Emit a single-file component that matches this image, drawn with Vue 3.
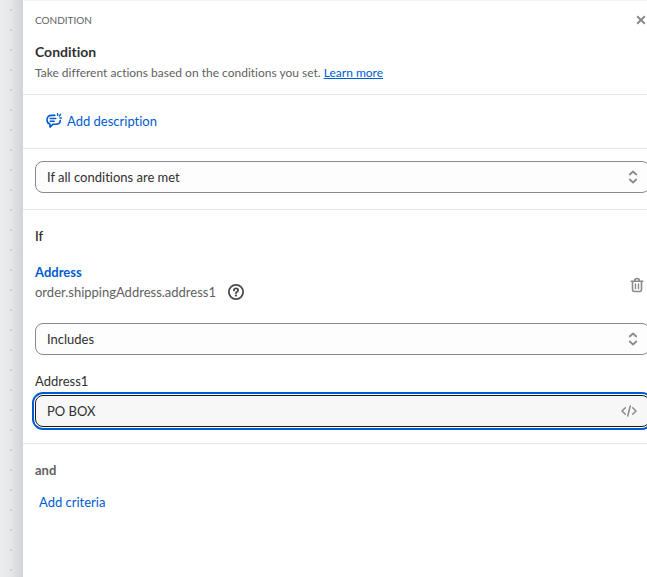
<script setup>
import { ref } from 'vue'

const match = ref('If all conditions are met')
const operator = ref('Includes')
const value = ref('PO BOX')
</script>

<template>
  <div class="workspace">
    <div class="canvas"></div>
    <main class="panel">
      <header class="section intro">
        <div class="topbar">
          <span class="eyebrow">CONDITION</span>
          <button class="icon-button close" type="button" aria-label="Close">
            <svg width="10" height="10" viewBox="0 0 10 10" fill="none" stroke="currentColor" stroke-width="2">
              <path d="M1.2 1.2l7.6 7.6M8.8 1.2L1.2 8.8" />
            </svg>
          </button>
        </div>
        <h1>Condition</h1>
        <p class="lead">Take different actions based on the conditions you set. <a href="#">Learn more</a></p>
      </header>

      <section class="section describe">
        <button class="link-button" type="button">
          <svg width="16" height="16" viewBox="0 0 16 16" fill="none" stroke="currentColor" stroke-width="1.600" stroke-linecap="round" stroke-linejoin="round">
            <path d="M8.800 2.400H5.400C2.700 2.400 1 4.200 1 6.700c0 2.300 1.200 3.900 3 4.400v3l3.200-2.900h2.600c2.700 0 4.300-1.500 4.500-3.600" />
            <path d="M4.200 5.500h5.600M4.200 8.200h4" />
            <path d="M11.600.800v1.500M14.600 1.400l-1.200 1.500M13.900 5.100h1.400" stroke-width="1.500" />
          </svg>
          <span>Add description</span>
        </button>
      </section>

      <section class="section matching">
        <div class="field">
          <select v-model="match" aria-label="Match type">
            <option>If all conditions are met</option>
            <option>If any condition is met</option>
          </select>
          <svg class="chevrons" width="10" height="14" viewBox="0 0 10 14" fill="none" stroke="currentColor" stroke-width="1.700" stroke-linecap="round" stroke-linejoin="round">
            <path d="M1.700 4.500L5 1.500l3.300 3M1.700 9.500L5 12.500l3.300-3" />
          </svg>
        </div>
      </section>

      <section class="section criteria">
        <h2>If</h2>
        <div class="subject">
          <div>
            <a class="variable" href="#">Address</a>
            <div class="path">
              <span>order.shippingAddress.address1</span>
              <button class="icon-button help" type="button" aria-label="Help">
                <svg width="16" height="16" viewBox="0 0 16 16" fill="none" stroke="currentColor" stroke-linecap="round">
                  <circle cx="8" cy="8" r="7.100" stroke-width="1.800" />
                  <path d="M5.900 6.400C5.900 5.100 6.800 4.400 8 4.400s2.100.7 2.100 1.800C10.100 7.700 8 7.700 8 9.200" stroke-width="1.800" />
                  <circle cx="8" cy="11.600" r="1.100" fill="currentColor" stroke="none" />
                </svg>
              </button>
            </div>
          </div>
          <button class="icon-button" type="button" aria-label="Delete condition">
            <svg width="14" height="16" viewBox="0 0 14 16" fill="none" stroke="currentColor" stroke-width="1.600" stroke-linecap="round" stroke-linejoin="round">
              <path d="M1.200 4.200h11.600M4.600 4C4.600 2.300 5.500 1.500 7 1.500S9.400 2.300 9.400 4M2.500 4.500v7.700c0 1.500.8 2.300 2.300 2.300h4.400c1.500 0 2.300-.8 2.300-2.300V4.500" />
              <path d="M5.500 7v4.700M8.500 7v4.700" stroke-width="1.400" />
            </svg>
          </button>
        </div>
        <div class="field">
          <select v-model="operator" aria-label="Operator">
            <option>Includes</option>
            <option>Does not include</option>
          </select>
          <svg class="chevrons" width="10" height="14" viewBox="0 0 10 14" fill="none" stroke="currentColor" stroke-width="1.700" stroke-linecap="round" stroke-linejoin="round">
            <path d="M1.700 4.500L5 1.500l3.300 3M1.700 9.500L5 12.500l3.300-3" />
          </svg>
        </div>
        <label for="address1">Address1</label>
        <div class="field">
          <input id="address1" v-model="value" class="active" type="text" />
          <button class="icon-button code" type="button" aria-label="Add variable">
            <svg width="16" height="12" viewBox="0 0 16 12" fill="none" stroke="currentColor" stroke-width="1.500" stroke-linecap="round" stroke-linejoin="round">
              <path d="M4.300 2.700L1 6l3.300 3.300M11.700 2.700L15 6l-3.300 3.300M9.300 1L6.700 11" />
            </svg>
          </button>
        </div>
      </section>

      <section class="section more">
        <h2 class="joiner">and</h2>
        <button class="link-button" type="button">Add criteria</button>
      </section>
    </main>
  </div>
</template>

<style>
body {
  margin: 0;
  background: #fff;
}
</style>

<style scoped>
* {
  box-sizing: border-box;
}

.workspace {
  display: grid;
  grid-template-columns: 23px minmax(0, 1fr);
  min-height: 100vh;
  overflow: hidden;
  color: #303030;
  font-family: "Segoe UI", Lato, "Open Sans", sans-serif;
  font-size: 13px;
  font-variant-ligatures: none;
  line-height: 20px;
}

.canvas {
  background:
    conic-gradient(from 90deg at 18px 18px, #cdced1 25%, transparent 0) -8px -9px / 20px 20px,
    linear-gradient(90deg, #ecedee 0, #e6e7e9 11px, #dedfe2 15px, #d3d4d8 23px);
}

.panel {
  margin-right: -3px;
  background: #fff;
  box-shadow: inset 0 1px 0 #f4f4f4;
}

.section {
  padding: 12px 0 16px 12px;
  border-bottom: 1px solid #e6e6e6;
}

.intro {
  padding: 10px 0 11px 12px;
}

.topbar {
  display: flex;
  justify-content: space-between;
  align-items: center;
  padding-right: 4px;
}

.eyebrow {
  color: #616161;
  font-size: 10px;
}

h1,
h2,
p {
  margin: 0;
}

h1 {
  margin-top: 12px;
  font-size: 14px;
  font-weight: 700;
  line-height: 20px;
}

h2 {
  font-size: 13px;
  font-weight: 600;
  line-height: 20px;
}

.lead {
  color: #616161;
  font-size: 12px;
  line-height: 21px;
}

a {
  color: #005bd3;
}

button {
  padding: 0;
  border: 0;
  background: none;
  color: inherit;
  font: inherit;
  cursor: pointer;
}

svg {
  display: block;
}

.icon-button {
  display: flex;
  color: #8a8a8a;
}

.describe {
  padding: 16px 0 17px 23px;
}

.link-button {
  display: flex;
  align-items: center;
  gap: 5px;
  color: #005bd3;
}

.field {
  position: relative;
}

select,
input {
  display: block;
  width: 100%;
  height: 32px;
  padding: 0 32px 0 11px;
  border: 1px solid #8a8a8a;
  border-radius: 8px;
  outline: none;
  appearance: none;
  background: #fdfdfd;
  color: #303030;
  font: inherit;
  font-variant-ligatures: none;
}

.active {
  border-color: #1a1a1a;
  background: #f7f7f7;
  box-shadow: 0 0 0 1px #fff, 0 0 0 3px #005bd3;
}

.chevrons {
  position: absolute;
  top: 9px;
  right: 12px;
  color: #8a8a8a;
  pointer-events: none;
}

.code {
  position: absolute;
  top: 10px;
  right: 13px;
}

.criteria {
  padding-top: 16px;
}

.subject {
  display: flex;
  justify-content: space-between;
  align-items: flex-end;
  margin: 16px 0 21px;
  padding-right: 6px;
}

.subject > .icon-button {
  padding-bottom: 9px;
}

.variable {
  display: block;
  font-weight: 700;
  text-decoration: none;
}

.path {
  display: flex;
  align-items: center;
  gap: 12px;
  color: #616161;
}

.help {
  color: #4a4a4a;
}

label {
  display: block;
  margin: 16px 0 4px;
}

.more {
  padding-top: 16px;
  border: 0;
}

.joiner {
  color: #616161;
  font-weight: 700;
}

.more .link-button {
  margin: 12px 0 0 4px;
}
</style>
